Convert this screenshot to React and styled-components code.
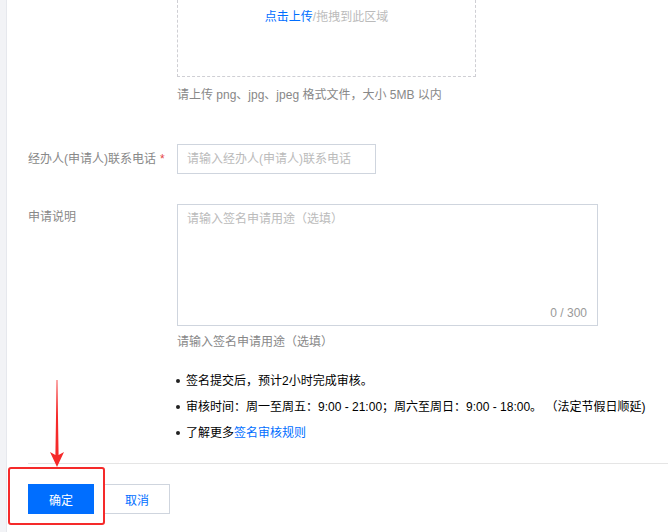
import React from 'react'
import styled, { createGlobalStyle } from 'styled-components'

const GlobalStyle = createGlobalStyle`
    html, body {
        margin: 0;
        padding: 0;
        background: #fff;
    }
    body {
        font-family: "Liberation Sans", "Noto Sans CJK SC", sans-serif;
        font-size: 12px;
        color: #000;
    }
`;

const Shell = styled.div`
    position: relative;
    display: flex;
    width: 668px;
    height: 532px;
    overflow: hidden;
    background: #fff;
`;

const SideStrip = styled.div`
    width: 6px;
    flex: none;
    background: #f2f3f6;
    border-right: 1px solid #e6e8ed;
`;

const Content = styled.div`
    flex: 1;
    display: flex;
    flex-direction: column;
    padding-left: 21px;
`;

const FormRow = styled.div`
    display: flex;
    align-items: ${props => props.top ? 'flex-start' : 'center'};
    margin-top: ${props => props.gap || 0}px;
`;

const Label = styled.div`
    width: 149px;
    flex: none;
    color: #888;
    line-height: 18px;
    padding-top: ${props => props.top ? 4 : 0}px;

    span {
        color: #e54545;
        margin-left: 4px;
    }
`;

const Field = styled.div`
    display: flex;
    flex-direction: column;
`;

const UploadBox = styled.div`
    width: 299px;
    height: 77px;
    box-sizing: border-box;
    border: 1px dashed #cfcfd4;
    border-top: 0;
    padding-top: 9px;
    text-align: center;
    line-height: 16px;
    color: #bbb;

    a {
        color: #006eff;
        text-decoration: none;
    }
`;

const Hint = styled.div`
    color: #888;
    line-height: 18px;
    margin-top: ${props => props.gap || 0}px;
`;

const TextInput = styled.input`
    width: 199px;
    height: 30px;
    box-sizing: border-box;
    border: 1px solid #cfd5de;
    padding: 0 9px;
    font: inherit;
    font-size: 12px;
    outline: none;

    &::placeholder {
        color: #bbb;
    }
`;

const AreaWrap = styled.div`
    position: relative;
    width: 421px;
    height: 122px;
    box-sizing: border-box;
    border: 1px solid #cfd5de;
`;

const TextArea = styled.textarea`
    width: 100%;
    height: 100%;
    box-sizing: border-box;
    border: 0;
    resize: none;
    padding: 5px 9px;
    font: inherit;
    font-size: 12px;
    line-height: 18px;
    outline: none;

    &::placeholder {
        color: #bbb;
    }
`;

const Counter = styled.span`
    position: absolute;
    right: 10px;
    bottom: 3px;
    color: #999;
    line-height: 18px;
`;

const Notes = styled.ul`
    list-style: none;
    margin: 17px 0 0 148px;
    padding: 0;
`;

const Note = styled.li`
    display: flex;
    align-items: center;
    line-height: 26px;
    color: #000;

    &::before {
        content: '';
        width: 4px;
        height: 4px;
        border-radius: 50%;
        background: #222;
        margin-right: 6px;
    }

    a {
        color: #006eff;
        text-decoration: none;
    }
`;

const Divider = styled.div`
    height: 1px;
    background: #e5e5e5;
    margin-top: 17px;
`;

const Actions = styled.div`
    display: flex;
    gap: 10px;
    margin-top: 20px;
`;

const Button = styled.button`
    width: 66px;
    height: 30px;
    box-sizing: border-box;
    font: inherit;
    font-size: 12px;
    cursor: pointer;
    border: 1px solid ${props => props.primary ? '#006eff' : '#cfd5de'};
    background: ${props => props.primary ? '#006eff' : '#fff'};
    color: ${props => props.primary ? '#fff' : '#006eff'};
`;

const Highlight = styled.div`
    position: absolute;
    left: 8px;
    top: 467px;
    width: 97px;
    height: 58px;
    box-sizing: border-box;
    border: 2.5px solid #f52a2a;
    border-radius: 3px;
    pointer-events: none;
`;

const Arrow = styled.svg`
    position: absolute;
    left: 46px;
    top: 378px;
    pointer-events: none;
`;

export default function App() {
    return (
        <>
            <GlobalStyle />
            <Shell>
                <SideStrip />
                <Content>
                    <FormRow top>
                        <Label />
                        <Field>
                            <UploadBox>
                                <a href="#">点击上传</a>/拖拽到此区域
                            </UploadBox>
                            <Hint gap={9}>请上传 png、jpg、jpeg 格式文件，大小 5MB 以内</Hint>
                        </Field>
                    </FormRow>

                    <FormRow gap={40}>
                        <Label>经办人(申请人)联系电话<span>*</span></Label>
                        <TextInput placeholder="请输入经办人(申请人)联系电话" />
                    </FormRow>

                    <FormRow top gap={30}>
                        <Label top>申请说明</Label>
                        <Field>
                            <AreaWrap>
                                <TextArea placeholder="请输入签名申请用途（选填）" />
                                <Counter>0 / 300</Counter>
                            </AreaWrap>
                            <Hint gap={7}>请输入签名申请用途（选填）</Hint>
                        </Field>
                    </FormRow>

                    <Notes>
                        <Note>签名提交后，预计2小时完成审核。</Note>
                        <Note>审核时间：周一至周五：9:00 - 21:00；周六至周日：9:00 - 18:00。 （法定节假日顺延)</Note>
                        <Note>了解更多<a href="#">签名审核规则</a></Note>
                    </Notes>

                    <Divider />

                    <Actions>
                        <Button primary>确定</Button>
                        <Button>取消</Button>
                    </Actions>
                </Content>

                <Arrow width="22" height="92" viewBox="0 0 22 92">
                    <path d="M10.6 2 L11.4 2 L12.6 77 L18 74 L11 89 L4 74 L9.4 77 Z" fill="#f52a2a" />
                </Arrow>
                <Highlight />
            </Shell>
        </>
    )
}
